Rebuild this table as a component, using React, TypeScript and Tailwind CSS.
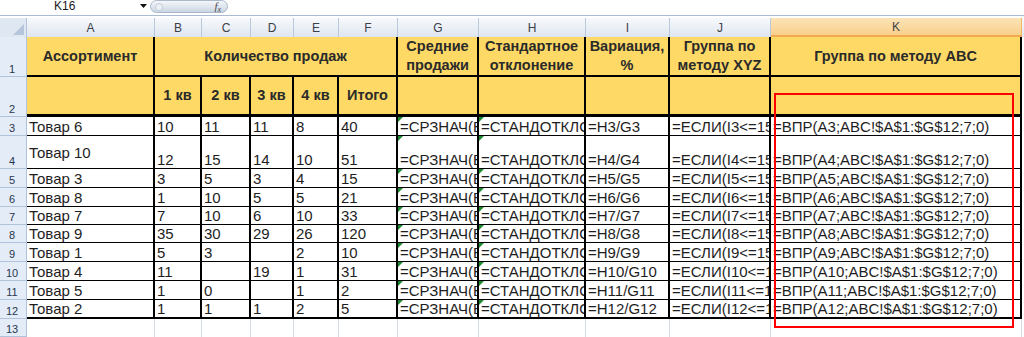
import React from "react";

type Row = {
  n: number;
  name: string;
  q: string[];
  total: string;
  tall?: boolean;
};

const rows: Row[] = [
  { n: 3, name: "Товар 6", q: ["10", "11", "11", "8"], total: "40" },
  { n: 4, name: "Товар 10", q: ["12", "15", "14", "10"], total: "51", tall: true },
  { n: 5, name: "Товар 3", q: ["3", "5", "3", "4"], total: "15" },
  { n: 6, name: "Товар 8", q: ["1", "10", "5", "5"], total: "21" },
  { n: 7, name: "Товар 7", q: ["7", "10", "6", "10"], total: "33" },
  { n: 8, name: "Товар 9", q: ["35", "30", "29", "26"], total: "120" },
  { n: 9, name: "Товар 1", q: ["5", "3", "", "2"], total: "10" },
  { n: 10, name: "Товар 4", q: ["11", "", "19", "1"], total: "31" },
  { n: 11, name: "Товар 5", q: ["1", "0", "", "1"], total: "2" },
  { n: 12, name: "Товар 2", q: ["1", "1", "1", "2"], total: "5" },
];

function RowHead({ n }: { n: number }) {
  return (
    <div className="flex items-end justify-center border-r border-b border-[#b1c3da] bg-[#e4ecf7] pb-[1px] pr-[2px] text-[11px] leading-none text-[#27364f]">
      {n}
    </div>
  );
}

function ColHead({ l }: { l: string }) {
  return (
    <div className="flex items-center justify-center border-r border-[#b9c9dd] bg-gradient-to-b from-[#f7f9fc] to-[#dfe6f0] text-[12px] leading-none text-[#3a3f48]">
      {l}
    </div>
  );
}

function Cell({
  children,
  last,
  center,
  tri,
}: {
  children?: React.ReactNode;
  last?: boolean;
  center?: boolean;
  tri?: boolean;
}) {
  return (
    <div
      className={
        "relative flex overflow-hidden whitespace-nowrap border-r-2 border-black bg-white pl-[2px] text-[15px] leading-[17px] text-[#1e1e1e] " +
        (last ? "border-b-2 " : "border-b ") +
        (center ? "items-center" : "items-end")
      }
    >
      {tri && (
        <span className="absolute left-0 top-0 h-0 w-0 border-t-[5px] border-r-[5px] border-t-[#1c8a2e] border-r-transparent" />
      )}
      {children}
    </div>
  );
}

function Yellow({
  children,
  className = "",
}: {
  children?: React.ReactNode;
  className?: string;
}) {
  return (
    <div
      className={
        "flex items-center justify-center border-r-2 border-black bg-[#fed966] text-center text-[14.5px] font-bold leading-[19px] text-[#2a2a2a] " +
        className
      }
    >
      {children}
    </div>
  );
}

export default function App() {
  return (
    <div className="h-[337px] w-[1024px] overflow-hidden bg-white font-['Liberation_Sans',Arial,sans-serif]">
      {/* formula bar */}
      <div className="flex h-[15px] items-start bg-white">
        <div className="w-[136px] pl-[54px] text-[12px] leading-[13px] text-[#1a1a1a]">
          K16
        </div>
        <div className="flex w-[14px] justify-center pt-[4px]">
          <svg width="7" height="4" viewBox="0 0 7 4">
            <path d="M0 0 L7 0 L3.5 4 Z" fill="#111" />
          </svg>
        </div>
        <div className="flex h-[13px] w-[78px] items-center justify-between rounded-b-full rounded-t-full border border-[#a9b8cb] bg-gradient-to-b from-[#f5f7fa] to-[#cbd5e2] pl-[4px] pr-[6px]">
          <span className="h-[8px] w-[8px] rounded-full border border-[#c4cdd9] bg-[#edf1f6]" />
          <span className="font-['Liberation_Serif',serif] text-[11px] italic leading-none text-[#4a4a4a]">
            f<sub className="text-[8px]">x</sub>
          </span>
        </div>
      </div>
      <div className="h-px bg-[#a9bcd3]" />
      <div className="h-[2px] bg-white" />

      {/* sheet */}
      <div className="relative">
        <div className="grid grid-cols-[27px_128px_47px_49px_43px_45px_59px_81px_107px_84px_101px_251px_2px] grid-rows-[19px_40px_40px_19px_33px_19px_19px_18px_18px_19px_19px_19px_19px_18px]">
          {/* column headers */}
          <div className="relative border-r border-[#b1c3da] bg-[#dfe7f2]">
            <svg className="absolute bottom-[2px] right-[2px]" width="11" height="11" viewBox="0 0 11 11">
              <path d="M11 0 L11 11 L0 11 Z" fill="#b5c6da" />
            </svg>
          </div>
          {["A", "B", "C", "D", "E", "F", "G", "H", "I", "J"].map((l) => (
            <ColHead key={l} l={l} />
          ))}
          <div className="flex items-center justify-center border-r border-b-2 border-r-[#f2b561] border-b-[#f3a94f] bg-gradient-to-b from-[#fbe3b6] to-[#f9d08b] text-[12px] leading-none text-[#3a3f48]">
            K
          </div>
          <div className="bg-gradient-to-b from-[#f7f9fc] to-[#dfe6f0]" />

          {/* row 1 */}
          <RowHead n={1} />
          <Yellow className="border-b-2">Ассортимент</Yellow>
          <Yellow className="col-span-5 border-b-2">Количество продаж</Yellow>
          <Yellow className="border-b-2">
            Средние
            <br />
            продажи
          </Yellow>
          <Yellow className="border-b-2">
            Стандартное
            <br />
            отклонение
          </Yellow>
          <Yellow className="border-b-2">
            Вариация,
            <br />%
          </Yellow>
          <Yellow className="border-b-2">
            Группа по
            <br />
            методу XYZ
          </Yellow>
          <Yellow className="border-b-2">Группа по методу ABC</Yellow>
          <div className="bg-white" />

          {/* row 2 */}
          <RowHead n={2} />
          <Yellow className="border-b-[3px]" />
          <Yellow className="border-b-[3px]">1 кв</Yellow>
          <Yellow className="border-b-[3px]">2 кв</Yellow>
          <Yellow className="border-b-[3px]">3 кв</Yellow>
          <Yellow className="border-b-[3px]">4 кв</Yellow>
          <Yellow className="border-b-[3px]">Итого</Yellow>
          <Yellow className="border-b-[3px]" />
          <Yellow className="border-b-[3px]" />
          <Yellow className="border-b-[3px]" />
          <Yellow className="border-b-[3px]" />
          <Yellow className="border-b-[3px]" />
          <div className="bg-white" />

          {/* data */}
          {rows.map((r) => {
            const last = r.n === 12;
            const j = r.n >= 10 ? `=ЕСЛИ(I${r.n}<=1` : `=ЕСЛИ(I${r.n}<=15`;
            return (
              <React.Fragment key={r.n}>
                <RowHead n={r.n} />
                <Cell last={last} center={r.tall}>
                  {r.name}
                </Cell>
                {r.q.map((v, i) => (
                  <Cell key={i} last={last}>
                    {v}
                  </Cell>
                ))}
                <Cell last={last}>{r.total}</Cell>
                <Cell last={last} tri>
                  =СРЗНАЧ(B
                </Cell>
                <Cell last={last} tri>
                  =СТАНДОТКЛО
                </Cell>
                <Cell last={last}>{`=H${r.n}/G${r.n}`}</Cell>
                <Cell last={last}>{j}</Cell>
                <Cell last={last}>{`=ВПР(A${r.n};ABC!$A$1:$G$12;7;0)`}</Cell>
                <div className="bg-white" />
              </React.Fragment>
            );
          })}

          {/* row 13 */}
          <RowHead n={13} />
          {Array.from({ length: 11 }).map((_, i) => (
            <div key={i} className="border-r border-[#d4dbe6] bg-white" />
          ))}
          <div className="bg-white" />
        </div>

        {/* red highlight */}
        <div className="pointer-events-none absolute left-[774px] top-[75px] h-[235px] w-[240px] border-2 border-[#ff0000]" />
      </div>
    </div>
  );
}
